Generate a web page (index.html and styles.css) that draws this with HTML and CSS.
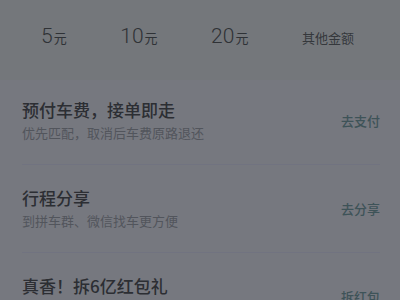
FILE: index.html
```html
<!DOCTYPE html>
<html lang="zh-CN">
<head>
<meta charset="utf-8">
<link rel="stylesheet" href="styles.css">
</head>
<body>
<div class="page">
  <div class="amounts">
    <div class="amount"><span class="num">5</span><span class="unit">元</span></div>
    <div class="amount"><span class="num">10</span><span class="unit">元</span></div>
    <div class="amount"><span class="num">20</span><span class="unit">元</span></div>
    <div class="amount other">其他金额</div>
  </div>
  <div class="list">
    <div class="row">
      <div class="info">
        <div class="title">预付车费，接单即走</div>
        <div class="sub">优先匹配，取消后车费原路退还</div>
      </div>
      <div class="action">去支付</div>
    </div>
    <div class="row">
      <div class="info">
        <div class="title">行程分享</div>
        <div class="sub">到拼车群、微信找车更方便</div>
      </div>
      <div class="action">去分享</div>
    </div>
    <div class="row">
      <div class="info">
        <div class="title">真香！拆6亿红包礼</div>
      </div>
      <div class="action">拆红包</div>
    </div>
  </div>
</div>
</body>
</html>
```

FILE: styles.css
```css
html, body {
  margin: 0;
  padding: 0;
  background: #76787f;
  font-family: "Noto Sans CJK SC", "Noto Sans", sans-serif;
}
.page {
  width: 400px;
  height: 300px;
  overflow: hidden;
}
.amounts {
  height: 80px;
  box-sizing: border-box;
  padding: 24px 46px 0 41px;
  display: flex;
  justify-content: space-between;
  align-items: baseline;
  background: #74777b;
  color: #2f3236;
}
.amount {
  line-height: 24px;
}
.num {
  font-family: Roboto, "Liberation Sans", sans-serif;
  font-weight: 300;
  font-size: 21px;
}
.unit {
  font-size: 13px;
  margin-left: 1px;
}
.other {
  font-size: 13px;
  color: #35383c;
}
.list {
  display: flex;
  flex-direction: column;
}
.row {
  margin: 0 20px 0 22px;
  padding: 18px 0 22px;
  display: flex;
  align-items: center;
  justify-content: space-between;
  border-bottom: 1px solid #717380;
}
.row + .row {
  padding-top: 21px;
}
.info {
  min-height: 44px;
}
.title {
  font-size: 17px;
  line-height: 24px;
  font-weight: 500;
  color: #2c2e33;
}
.sub {
  margin-top: 2px;
  font-size: 13px;
  line-height: 18px;
  color: #52555c;
}
.action {
  font-size: 13px;
  font-weight: 500;
  color: #3e5358;
}
```
